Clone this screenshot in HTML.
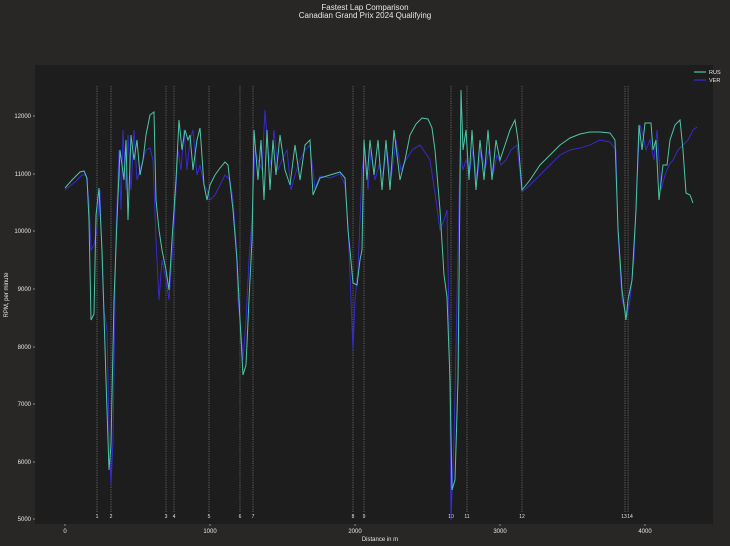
<!DOCTYPE html><html><head><style>html,body{margin:0;padding:0;background:#292726;}svg{display:block}text{font-family:"Liberation Sans",sans-serif;fill:#e6e6e6}</style></head><body>
<svg width="730" height="546" viewBox="0 0 730 546">
<rect width="730" height="546" fill="#292726"/>
<text x="365" y="10" font-size="8" text-anchor="middle">Fastest Lap Comparison</text>
<text x="365" y="18" font-size="8" text-anchor="middle">Canadian Grand Prix 2024 Qualifying</text>
<rect x="35" y="65" width="678" height="459" fill="#1e1d1d"/>
<g stroke="#bbb" stroke-width="0.6" stroke-dasharray="1.2,1.2" opacity="0.7">
<line x1="97" y1="86" x2="97" y2="513"/><line x1="111" y1="86" x2="111" y2="513"/><line x1="166" y1="86" x2="166" y2="513"/><line x1="174" y1="86" x2="174" y2="513"/><line x1="209" y1="86" x2="209" y2="513"/><line x1="240" y1="86" x2="240" y2="513"/><line x1="253" y1="86" x2="253" y2="513"/><line x1="353" y1="86" x2="353" y2="513"/><line x1="364" y1="86" x2="364" y2="513"/><line x1="451" y1="86" x2="451" y2="513"/><line x1="467" y1="86" x2="467" y2="513"/><line x1="522" y1="86" x2="522" y2="513"/><line x1="625" y1="86" x2="625" y2="513"/><line x1="628" y1="86" x2="628" y2="513"/>
</g>
<g font-size="5" text-anchor="middle">
<text x="97" y="518">1</text><text x="111" y="518">2</text><text x="166" y="518">3</text><text x="174" y="518">4</text><text x="209" y="518">5</text><text x="240" y="518">6</text><text x="253" y="518">7</text><text x="353" y="518">8</text><text x="364" y="518">9</text><text x="451" y="518">10</text><text x="467" y="518">11</text><text x="522" y="518">12</text><text x="624" y="518">13</text><text x="630" y="518">14</text>
</g>
<g font-size="6" text-anchor="end">
<text x="31" y="118">12000</text><text x="31" y="176">11000</text><text x="31" y="233">10000</text><text x="31" y="291">9000</text><text x="31" y="349">8000</text><text x="31" y="406">7000</text><text x="31" y="464">6000</text><text x="31" y="521">5000</text>
</g>
<g stroke="#ccc" stroke-width="0.6"><line x1="33" y1="116" x2="35" y2="116"/><line x1="33" y1="174" x2="35" y2="174"/><line x1="33" y1="231" x2="35" y2="231"/><line x1="33" y1="289" x2="35" y2="289"/><line x1="33" y1="347" x2="35" y2="347"/><line x1="33" y1="404" x2="35" y2="404"/><line x1="33" y1="462" x2="35" y2="462"/><line x1="33" y1="519" x2="35" y2="519"/>
<line x1="65" y1="524" x2="65" y2="526"/><line x1="210" y1="524" x2="210" y2="526"/><line x1="355" y1="524" x2="355" y2="526"/><line x1="500" y1="524" x2="500" y2="526"/><line x1="645" y1="524" x2="645" y2="526"/></g>
<g font-size="6" text-anchor="middle"><text x="65" y="533">0</text><text x="210" y="533">1000</text><text x="355" y="533">2000</text><text x="500" y="533">3000</text><text x="645" y="533">4000</text></g>
<text x="380" y="541" font-size="6" text-anchor="middle">Distance in m</text>
<text x="8" y="295" font-size="6" text-anchor="middle" transform="rotate(-90 8 295)">RPM, per minute</text>
<polyline fill="none" stroke="#3a2adb" stroke-width="0.9" points="65,190 75,182 82,175 86,175 89,200 91,250 94,245 97,230 99,200 100,190 102,260 104,310 107,330 109,430 111,485 113,440 116,230 119,150 121,210 123,130 126,190 128,135 131,190 134,130 137,180 140,170 143,160 146,150 150,148 153,160 156,240 159,300 162,260 166,280 169,300 172,260 175,210 178,150 181,170 184,130 187,170 190,140 193,130 197,175 200,165 204,185 207,190 210,200 215,195 220,185 225,175 230,180 233,200 236,240 238,300 241,330 243,360 246,320 249,260 252,220 255,150 258,160 262,170 265,110 268,150 271,165 274,130 278,170 282,160 287,150 291,190 295,175 300,160 305,150 310,145 315,188 320,176 330,178 340,174 345,185 348,225 351,300 353,350 355,300 358,270 362,170 365,150 368,190 371,150 375,180 379,165 383,175 387,150 391,180 396,140 401,170 406,160 412,150 420,145 430,160 436,200 440,230 444,220 447,210 449,320 451,520 454,440 457,300 460,150 463,170 466,160 470,170 473,150 477,180 481,150 485,170 489,150 493,175 497,155 501,165 506,160 511,150 517,145 522,192 530,185 540,175 550,165 560,155 570,150 580,148 590,145 600,140 610,142 616,150 618,235 622,300 625,310 627,315 630,300 634,260 637,180 640,125 643,135 646,150 650,140 654,160 657,130 661,190 665,175 669,165 673,160 678,150 683,145 688,140 693,130 697,127"/>
<polyline fill="none" stroke="#4cc6a8" stroke-width="1" points="65,188 72,180 80,172 84,171 87,178 89,220 91,320 94,314 96,215 99,188 102,250 106,380 109,470 111,445 114,300 117,220 120,150 124,180 126,140 128,220 131,135 134,160 137,140 140,175 143,160 146,135 150,115 154,112 156,200 159,230 162,250 166,270 169,290 172,240 176,180 179,120 182,150 185,130 188,140 190,135 193,170 197,140 200,128 204,185 207,200 210,185 215,175 220,168 225,162 228,165 233,210 237,260 240,320 243,375 246,365 249,300 252,240 254,130 258,180 261,140 264,200 267,130 270,190 273,140 276,175 280,135 285,170 290,185 295,145 300,180 305,145 310,140 313,195 320,178 330,175 340,172 345,178 348,230 350,250 353,283 357,285 360,260 362,250 364,140 367,180 370,140 374,175 378,140 382,190 386,140 390,190 394,130 400,180 405,160 410,135 416,124 422,118 428,119 432,128 435,150 440,210 444,275 447,297 450,380 452,490 455,480 458,380 461,90 463,150 466,130 469,180 472,130 476,190 480,140 484,180 488,130 492,180 496,140 500,160 505,145 510,130 515,120 518,140 522,190 530,180 540,165 550,155 560,145 570,138 580,134 590,132 600,132 610,133 615,140 618,228 622,290 626,320 628,300 632,280 636,210 639,125 642,150 645,123 651,123 653,150 656,140 659,200 663,165 667,165 670,140 675,125 680,120 683,150 686,193 690,195 693,203"/>
<line x1="694" y1="72" x2="706" y2="72" stroke="#4cc6a8" stroke-width="1.2"/><text x="709" y="74" font-size="5.5">RUS</text>
<line x1="694" y1="80" x2="706" y2="80" stroke="#3a2adb" stroke-width="1.2"/><text x="709" y="82" font-size="5.5">VER</text>
</svg>
</body></html>
